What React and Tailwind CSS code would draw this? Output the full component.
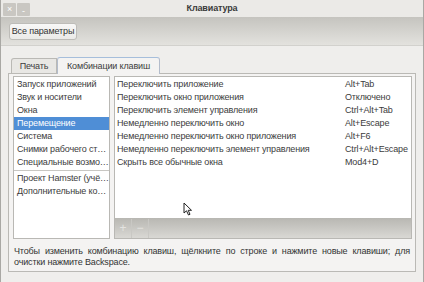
import React from "react";

const leftItems = [
  "Запуск приложений",
  "Звук и носители",
  "Окна",
  "Перемещение",
  "Система",
  "Снимки рабочего ст…",
  "Специальные возмо…",
];
const leftItems2 = ["Проект Hamster (учё…", "Дополнительные ко…"];

const rows = [
  ["Переключить приложение", "Alt+Tab"],
  ["Переключить окно приложения", "Отключено"],
  ["Переключить элемент управления", "Ctrl+Alt+Tab"],
  ["Немедленно переключить окно", "Alt+Escape"],
  ["Немедленно переключить окно приложения", "Alt+F6"],
  ["Немедленно переключить элемент управления", "Ctrl+Alt+Escape"],
  ["Скрыть все обычные окна", "Mod4+D"],
];

export default function App() {
  return (
    <div
      className="w-[424px] h-[282px] overflow-hidden bg-[#efeeec] border-x border-[#a9a8a4] flex flex-col text-[#3c3c3c] relative tracking-[-0.15px]"
      style={{ fontFamily: '"Liberation Sans", Arial, sans-serif' }}
    >
      {/* title bar */}
      <div className="h-[17px] bg-[#ebeae7] grid grid-cols-[1fr_auto_1fr] items-center">
        <div className="flex gap-[1px] pl-[2px] pt-[1px]">
          <div className="w-[13px] h-[13px] bg-[#c9c7c2] rounded-[1px] flex items-center justify-center text-white text-[9px] leading-none">×</div>
          <div className="w-[13px] h-[13px] bg-[#c9c7c2] rounded-[1px] flex items-end justify-center text-white text-[9px] leading-[10px]">-</div>
        </div>
        <div className="text-[9px] font-bold text-[#3a3a3a] leading-none whitespace-nowrap">Клавиатура</div>
        <div />
      </div>
      {/* toolbar */}
      <div className="h-[29px] bg-gradient-to-b from-[#c5c4bf] to-[#e3e2de] border-b border-[#d2d1cd] px-[8px] pt-[6px]">
        <div className="w-[68px] h-[17px] rounded-[3px] border border-[#bdbcb8] bg-gradient-to-b from-[#f8f8f7] to-[#ebeae8] flex items-center justify-center text-[9px] text-[#333] leading-none whitespace-nowrap">
          Все параметры
        </div>
      </div>
      {/* body */}
      <div className="px-[7px] pt-[10px] flex flex-col">
        {/* tabs */}
        <div className="flex items-end pl-[3px] h-[17px]">
          <div className="w-[46px] h-[15px] border border-b-0 border-[#bab9b5] bg-[#e8e7e4] rounded-tl-[3px] flex items-center justify-center text-[9px] leading-none whitespace-nowrap">
            Печать
          </div>
          <div className="w-[103px] h-[17px] border border-b-0 border-[#b3bccb] border-t-[#a6bedb] bg-[#f4f3f2] rounded-t-[3px] flex items-center justify-center text-[9px] leading-none -mb-[1px] relative z-10 whitespace-nowrap">
            Комбинации клавиш
          </div>
        </div>
        {/* panel */}
        <div className="h-[199px] border border-[#bab9b5] bg-[#f4f3f2] pl-[4px] pr-[3px] pt-[2px] flex flex-col">
          <div className="flex gap-[4px] h-[163px]">
            {/* left list */}
            <div className="w-[97px] h-full bg-white border border-[#b9b8b4] pt-[1px] flex flex-col text-[9px] leading-[13px]">
              {leftItems.map((t, i) => (
                <div
                  key={t}
                  className={
                    "h-[13px] px-[3px] whitespace-nowrap overflow-hidden " +
                    (i === 3 ? "bg-[#4f8ed6] text-white" : "")
                  }
                >
                  {t}
                </div>
              ))}
              <div className="h-[1px] bg-[#c8c7c3] my-[1px]" />
              {leftItems2.map((t) => (
                <div key={t} className="h-[13px] px-[3px] whitespace-nowrap overflow-hidden">
                  {t}
                </div>
              ))}
            </div>
            {/* right list */}
            <div className="flex-1 h-full border border-[#b9b8b4] flex flex-col">
              <div className="flex-1 bg-white pt-[1px] text-[9px] leading-[13px] relative">
                {rows.map(([a, b]) => (
                  <div key={a} className="h-[13px] flex px-[2px] whitespace-nowrap">
                    <div className="w-[228px]">{a}</div>
                    <div>{b}</div>
                  </div>
                ))}
                <svg
                  className="absolute left-[68px] top-[125px]"
                  width="10"
                  height="14"
                  viewBox="0 0 10 14"
                >
                  <path d="M1 1 L1 11 L3.5 8.8 L5.5 13 L7 12.3 L5.2 8.3 L8.5 8.3 Z" fill="#fff" stroke="#222" strokeWidth="1" strokeLinejoin="round" />
                </svg>
              </div>
              <div className="h-[20px] bg-gradient-to-b from-[#b8b7b2] to-[#d9d8d4] flex items-center">
                <div className="w-[17px] h-[19px] flex items-center justify-center text-[#e4e3e0] text-[12px] leading-none border-r border-[#c9c8c4]">+</div>
                <div className="w-[17px] h-[19px] flex items-center justify-center text-[#e4e3e0] text-[12px] leading-none border-r border-[#c9c8c4]">−</div>
              </div>
            </div>
          </div>
          <div className="pl-[1px] pr-[2px] pt-[7px] text-[9px] leading-[11px] text-[#333]" style={{ textAlign: "justify" }}>
            Чтобы изменить комбинацию клавиш, щёлкните по строке и нажмите новые клавиши; для очистки нажмите Backspace.
          </div>
        </div>
      </div>
    </div>
  );
}
